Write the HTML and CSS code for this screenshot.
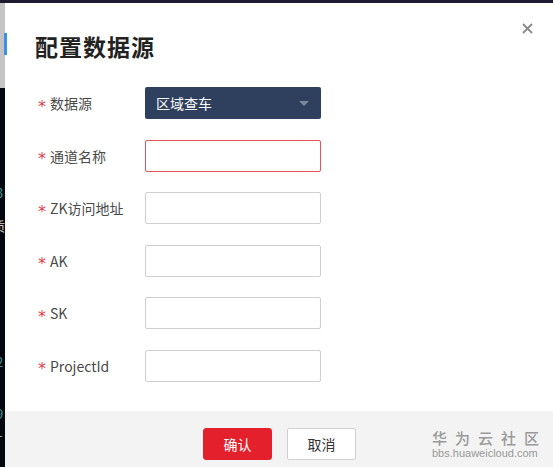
FILE: index.html
```html
<!DOCTYPE html>
<html lang="zh">
<head>
<meta charset="utf-8">
<link rel="stylesheet" href="styles.css">
</head>
<body>
<div class="backdrop">
  <div class="topbar"></div>
  <div class="side">
    <div class="side-gray"></div>
    <div class="side-text">
      <span class="c1">3</span>
      <span class="c2">质</span>
      <span class="c3">2</span>
      <span class="c4">9</span>
      <span class="c5">-</span>
    </div>
  </div>
</div>

<div class="modal">
  <div class="accent"></div>
  <button class="close" aria-label="close">
    <svg width="11" height="11" viewBox="0 0 11 11"><path d="M1 1L10 10M10 1L1 10" stroke="#8a8a8a" stroke-width="1.8"/></svg>
  </button>
  <h1 class="title">配置数据源</h1>
  <div class="form">
    <div class="row">
      <label class="label"><span class="req">*</span>数据源</label>
      <div class="select"><span>区域查车</span><i class="caret"></i></div>
    </div>
    <div class="row">
      <label class="label"><span class="req">*</span>通道名称</label>
      <div class="input error"></div>
    </div>
    <div class="row">
      <label class="label"><span class="req">*</span>ZK访问地址</label>
      <div class="input"></div>
    </div>
    <div class="row">
      <label class="label"><span class="req">*</span>AK</label>
      <div class="input"></div>
    </div>
    <div class="row">
      <label class="label"><span class="req">*</span>SK</label>
      <div class="input"></div>
    </div>
    <div class="row">
      <label class="label"><span class="req">*</span>ProjectId</label>
      <div class="input"></div>
    </div>
  </div>
  <div class="footer">
    <button class="btn primary">确认</button>
    <button class="btn">取消</button>
    <div class="mark">
      <div class="mark-cn">华为云社区</div>
      <div class="mark-en">bbs.huaweicloud.com</div>
    </div>
  </div>
</div>
</body>
</html>
```
FILE: styles.css
```css
* { box-sizing: border-box; }
html, body {
  margin: 0;
  width: 553px;
  height: 467px;
  overflow: hidden;
  background: #05070f;
  font-family: "Noto Sans CJK SC", "Noto Sans", sans-serif;
}
.backdrop { width: 553px; height: 467px; }
.topbar { height: 3px; background: #1b1a30; }
.side { width: 5px; height: 464px; position: relative; overflow: hidden; }
.side-gray { height: 85px; background: #c3c3c3; }
.side-text span {
  position: absolute;
  font-size: 13px;
  color: #3b8f8f;
  line-height: 14px;
}
.side-text .c1 { top: 183px; left: -4px; }
.side-text .c2 { top: 216px; left: -8px; color: #d0d0d0; }
.side-text .c3 { top: 352px; left: -4px; }
.side-text .c4 { top: 404px; left: -4px; }
.side-text .c5 { top: 425px; left: -2px; color: #aaa; }

.modal {
  position: absolute;
  left: 5px;
  top: 3px;
  width: 552px;
  height: 470px;
  background: #fff;
}
.accent {
  position: absolute;
  left: -1px;
  top: 30px;
  width: 3px;
  height: 22px;
  background: #3d8fe8;
}
.close {
  position: absolute;
  right: 24px;
  top: 20px;
  border: 0;
  background: none;
  padding: 0;
  width: 11px;
  height: 11px;
  display: block;
}
.close svg { display: block; }
.title {
  margin: 0;
  padding: 31px 0 0 30px;
  font-size: 23px;
  line-height: 24px;
  font-weight: 700;
  color: #222;
  letter-spacing: 1px;
}
.form {
  display: flex;
  flex-direction: column;
  gap: 20.6px;
  padding: 29px 0 0 33px;
}
.row {
  display: flex;
  align-items: center;
  height: 32px;
}
.label {
  width: 107px;
  height: 32px;
  font-size: 14px;
  color: #4a4a4a;
  display: flex;
  align-items: center;
}
.req {
  color: #e0404e;
  font-family: "DejaVu Sans", sans-serif;
  font-size: 16px;
  line-height: 16px;
  width: 12px;
  padding-top: 7px;
  height: 23px;
}
.input {
  width: 176px;
  height: 32px;
  border: 1px solid #cfcfcf;
  border-radius: 2px;
  background: #fff;
}
.input.error { border-color: #e4505c; }
.select {
  width: 176px;
  height: 32px;
  background: #2f3f5e;
  border-radius: 2px;
  color: #fff;
  font-size: 14px;
  display: flex;
  align-items: center;
  justify-content: space-between;
  padding: 0 12px 0 11px;
}
.caret {
  width: 0;
  height: 0;
  border-left: 5px solid transparent;
  border-right: 5px solid transparent;
  border-top: 5px solid #7c879b;
}
.footer {
  position: absolute;
  left: 0;
  right: 0;
  top: 408px;
  height: 62px;
  background: #f3f3f3;
  display: flex;
  align-items: flex-start;
  padding: 17px 0 0 198px;
  gap: 15px;
}
.btn {
  width: 69px;
  height: 32px;
  border: 1px solid #cfcfcf;
  background: #fff;
  border-radius: 2px;
  font-family: inherit;
  font-size: 14px;
  color: #333;
  padding: 0;
}
.btn.primary {
  background: #e4202c;
  border-color: #e4202c;
  color: #fff;
  border-radius: 3px;
}
.mark {
  margin-left: 61px;
  margin-top: 1px;
  color: #9a9a9a;
  display: flex;
  flex-direction: column;
  align-items: flex-start;
}
.mark-cn {
  font-size: 15px;
  line-height: 17px;
  height: 17px;
  letter-spacing: 8px;
  font-weight: 500;
  color: #999;
}
.mark-en {
  font-family: "Liberation Sans", sans-serif;
  font-size: 11px;
  line-height: 11px;
  margin-top: 2px;
  color: #999;
}
```
